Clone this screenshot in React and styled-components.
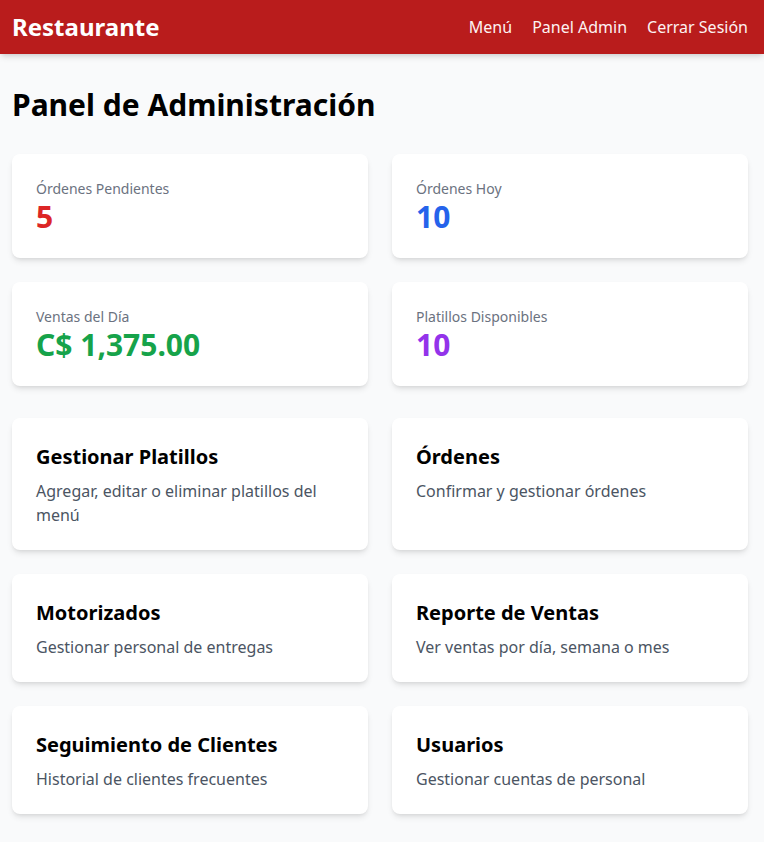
import React from 'react';
import styled, { createGlobalStyle } from 'styled-components';

const stats = [
    { label: 'Órdenes Pendientes', value: '5', color: '#dc2626' },
    { label: 'Órdenes Hoy', value: '10', color: '#2563eb' },
    { label: 'Ventas del Día', value: 'C$ 1,375.00', color: '#16a34a' },
    { label: 'Platillos Disponibles', value: '10', color: '#9333ea' },
];

const actions = [
    { title: 'Gestionar Platillos', desc: 'Agregar, editar o eliminar platillos del menú' },
    { title: 'Órdenes', desc: 'Confirmar y gestionar órdenes' },
    { title: 'Motorizados', desc: 'Gestionar personal de entregas' },
    { title: 'Reporte de Ventas', desc: 'Ver ventas por día, semana o mes' },
    { title: 'Seguimiento de Clientes', desc: 'Historial de clientes frecuentes' },
    { title: 'Usuarios', desc: 'Gestionar cuentas de personal' },
];

const App = () => {
    return (
        <>
            <GlobalStyle />
            <Navbar>
                <Brand>Restaurante</Brand>
                <NavLinks>
                    <NavItem href="#">Menú</NavItem>
                    <NavItem href="#">Panel Admin</NavItem>
                    <NavItem href="#">Cerrar Sesión</NavItem>
                </NavLinks>
            </Navbar>
            <Main>
                <Title>Panel de Administración</Title>
                <Grid>
                    {stats.map(s => (
                        <StatCard key={s.label}>
                            <StatLabel>{s.label}</StatLabel>
                            <StatValue $color={s.color}>{s.value}</StatValue>
                        </StatCard>
                    ))}
                </Grid>
                <Grid>
                    {actions.map(a => (
                        <ActionCard key={a.title}>
                            <ActionTitle>{a.title}</ActionTitle>
                            <ActionDesc>{a.desc}</ActionDesc>
                        </ActionCard>
                    ))}
                </Grid>
            </Main>
        </>
    )
}

export default App;


const GlobalStyle = createGlobalStyle`
    * { box-sizing: border-box; }
    body {
        margin: 0;
        background: #f9fafb;
        font-family: "Noto Sans", "Open Sans", sans-serif;
        color: #111;
    }
`;

const Navbar = styled.nav`
    display: flex;
    justify-content: space-between;
    align-items: center;
    height: 54px;
    padding: 0 16px 0 12px;
    background: #b91c1c;
    color: #fff;
    box-shadow: 0 4px 6px -1px rgba(0,0,0,.12), 0 2px 4px -2px rgba(0,0,0,.1);
`;

const Brand = styled.div`
    font-size: 24px;
    font-weight: 700;
    line-height: 32px;
`;

const NavLinks = styled.div`
    display: flex;
    gap: 20px;
`;

const NavItem = styled.a`
    color: #fdf2f2;
    text-decoration: none;
    font-size: 16px;
    line-height: 24px;
`;

const Main = styled.main`
    padding: 33px 16px 32px 12px;
`;

const Title = styled.h1`
    margin: 0 0 31px;
    font-size: 30px;
    line-height: 36px;
    font-weight: 700;
    color: #000;
`;

const Grid = styled.div`
    display: grid;
    grid-template-columns: 1fr 1fr;
    gap: 24px;
    margin-bottom: 32px;
`;

const Card = styled.div`
    background: #fff;
    border-radius: 8px;
    padding: 25px 24px 23px;
    box-shadow: 0 4px 6px -1px rgba(0,0,0,.1), 0 2px 4px -2px rgba(0,0,0,.1);
`;

const StatCard = styled(Card)``;

const StatLabel = styled.div`
    font-size: 14px;
    line-height: 20px;
    color: #6b7280;
`;

const StatValue = styled.div`
    font-size: 30px;
    line-height: 36px;
    font-weight: 700;
    color: ${p => p.$color};
`;

const ActionCard = styled(Card)``;

const ActionTitle = styled.h2`
    margin: 0 0 8px;
    font-size: 20px;
    line-height: 28px;
    font-weight: 700;
    color: #000;
`;

const ActionDesc = styled.p`
    margin: 0;
    font-size: 16px;
    line-height: 24px;
    color: #4b5563;
`;
